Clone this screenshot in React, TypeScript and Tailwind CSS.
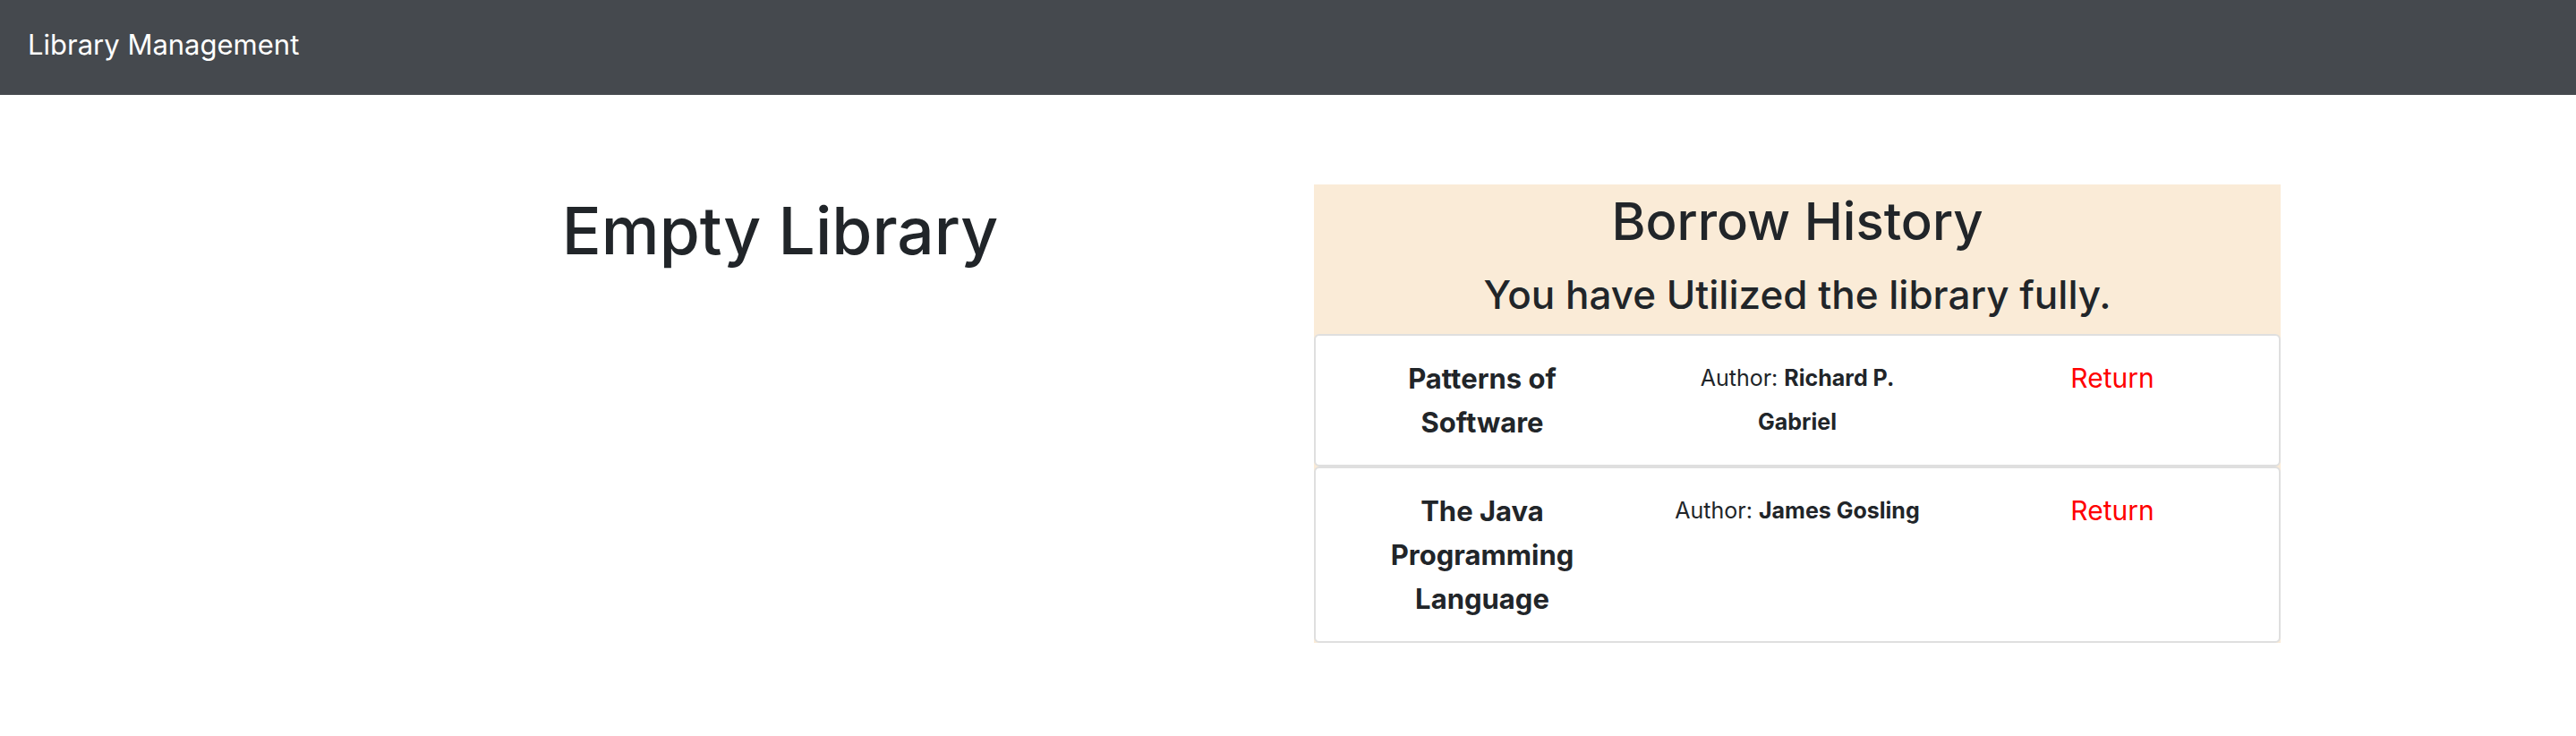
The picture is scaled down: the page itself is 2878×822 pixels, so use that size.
import React from "react";

type Loan = {
    title: string;
    author: string;
};

const loans: Loan[] = [
    { title: "Patterns of Software", author: "Richard P. Gabriel" },
    { title: "The Java Programming Language", author: "James Gosling" },
];

function LoanCard({ loan }: { loan: Loan }) {
    return (
        <div className="flex border-2 border-[#dfdfdf] rounded-[6px] bg-white px-[10px] py-[23px] leading-[49px]">
            <div className="w-[352px] px-[31px] text-center text-[31px] font-bold">{loan.title}</div>
            <div className="w-[352px] px-[31px] text-center text-[25px]">
                <span>Author: </span>
                <span className="font-bold">{loan.author}</span>
            </div>
            <div className="w-[352px] px-[31px] text-center text-[30px] text-[#ff0000]">Return</div>
        </div>
    );
}

export default function App() {
    return (
        <div className="min-h-screen bg-white text-[#212529] font-['Inter','Liberation_Sans',sans-serif]">
            <nav className="h-[106px] bg-[#45494e] px-[31px] pt-[31px]">
                <div className="text-white text-[31px] leading-[38px]">Library Management</div>
            </nav>
            <div className="flex pl-[264px]">
                <div className="w-[1204px] pl-[11px] pt-[108px] text-center">
                    <h1 className="text-[73px] leading-[88px] font-medium">Empty Library</h1>
                </div>
                <div className="w-[1080px] mt-[100px]">
                    <div className="bg-[#faebd7]">
                        <div className="pt-[6px] pb-[17px] text-center font-medium">
                            <h2 className="text-[58px] leading-[70px]">Borrow History</h2>
                            <h4 className="mt-[21px] text-[44px] leading-[53px]">You have Utilized the library fully.</h4>
                        </div>
                        {loans.map((loan) => (
                            <LoanCard key={loan.title} loan={loan} />
                        ))}
                    </div>
                </div>
            </div>
        </div>
    );
}
